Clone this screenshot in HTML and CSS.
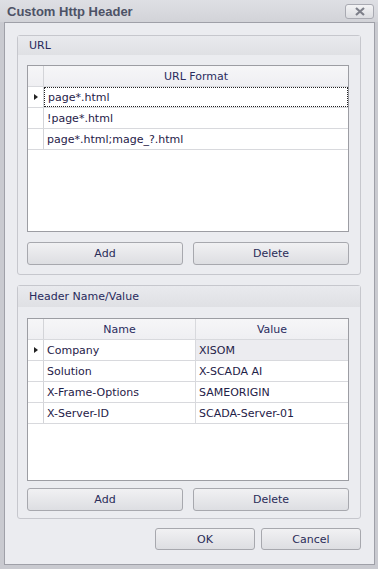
FILE: index.html
```html
<!DOCTYPE html>
<html>
<head>
<meta charset="utf-8">
<link rel="stylesheet" href="styles.css">
</head>
<body>
<div class="window">
  <div class="titlebar">
    <span class="title">Custom Http Header</span>
    <button class="close" type="button" aria-label="Close">
      <svg width="12" height="9" viewBox="0 0 12 9"><path d="M2 1 L10 8 M10 1 L2 8" stroke="#7d7f89" stroke-width="2.2" fill="none"/></svg>
    </button>
  </div>
  <div class="client">
    <section class="group">
      <div class="group-head">URL</div>
      <div class="group-body">
        <div class="grid grid-url">
          <div class="row head">
            <div class="ind"></div>
            <div class="cell hcell">URL Format</div>
          </div>
          <div class="row">
            <div class="ind"><span class="arrow"></span></div>
            <div class="cell"><span class="focus">page*.html</span></div>
          </div>
          <div class="row">
            <div class="ind"></div>
            <div class="cell">!page*.html</div>
          </div>
          <div class="row">
            <div class="ind"></div>
            <div class="cell">page*.html;mage_?.html</div>
          </div>
          <div class="filler"></div>
        </div>
        <div class="btn-row">
          <button class="btn" type="button">Add</button>
          <button class="btn" type="button">Delete</button>
        </div>
      </div>
    </section>

    <section class="group group-2">
      <div class="group-head">Header Name/Value</div>
      <div class="group-body">
        <div class="grid grid-hv">
          <div class="row head">
            <div class="ind"></div>
            <div class="cell hcell">Name</div>
            <div class="cell hcell">Value</div>
          </div>
          <div class="row">
            <div class="ind"><span class="arrow"></span></div>
            <div class="cell">Company</div>
            <div class="cell sel">XISOM</div>
          </div>
          <div class="row">
            <div class="ind"></div>
            <div class="cell">Solution</div>
            <div class="cell">X-SCADA AI</div>
          </div>
          <div class="row">
            <div class="ind"></div>
            <div class="cell">X-Frame-Options</div>
            <div class="cell">SAMEORIGIN</div>
          </div>
          <div class="row">
            <div class="ind"></div>
            <div class="cell">X-Server-ID</div>
            <div class="cell">SCADA-Server-01</div>
          </div>
          <div class="filler"></div>
        </div>
        <div class="btn-row">
          <button class="btn" type="button">Add</button>
          <button class="btn" type="button">Delete</button>
        </div>
      </div>
    </section>

    <div class="dialog-buttons">
      <button class="btn btn-dlg" type="button">OK</button>
      <button class="btn btn-dlg" type="button">Cancel</button>
    </div>
  </div>
</div>
</body>
</html>
```
FILE: styles.css
```css
* { box-sizing: border-box; }
html, body {
  margin: 0;
  padding: 0;
}
body {
  background: #c8c9cf;
  font-family: "DejaVu Sans", Verdana, sans-serif;
  font-size: 11px;
  color: #1f2148;
}
.window {
  width: 378px;
  height: 569px;
  display: flex;
  flex-direction: column;
  background: #c9cad0;
  padding: 0 3px 4px 4px;
}
.titlebar {
  height: 22px;
  margin: 0 -3px 0 -4px;
  padding: 0 4px 0 7px;
  display: flex;
  align-items: center;
  justify-content: space-between;
  background: linear-gradient(#dedfe4, #d2d3d8);
}
.title {
  font-family: "Liberation Sans", Arial, sans-serif;
  font-weight: bold;
  font-size: 13px;
  color: #4d5266;
  padding-top: 1px;
}
.close {
  width: 29px;
  height: 15px;
  margin-top: 1px;
  padding: 0;
  border: 1px solid #a9aab2;
  border-radius: 3px;
  background: linear-gradient(#f3f3f5, #dcdde1);
  display: flex;
  align-items: center;
  justify-content: center;
}
.client {
  flex: 1;
  border: 1px solid #9fa0a8;
  background: #ebecf0;
  padding: 12px 13px 0 12px;
  display: flex;
  flex-direction: column;
}
.group {
  border: 1px solid #c6c7cd;
  border-radius: 3px;
  height: 240px;
  display: flex;
  flex-direction: column;
}
.group-2 {
  margin-top: 10px;
  height: 234px;
}
.group-head {
  height: 19px;
  padding: 3px 0 0 11px;
  background: linear-gradient(#e9eaee, #dfe0e4);
  color: #282a5c;
}
.group-2 .group-head {
  height: 21px;
  padding-top: 4px;
}
.group-body {
  flex: 1;
  display: flex;
  flex-direction: column;
  padding: 10px 11px 9px 9px;
}
.group-2 .group-body {
  padding: 11px 11px 7px 9px;
}
.grid {
  background: #fff;
  border: 1px solid #9c9da3;
  display: flex;
  flex-direction: column;
}
.grid-url { height: 167px; }
.grid-hv { height: 163px; }
.row {
  display: flex;
  height: 21px;
  border-bottom: 1px solid #d8d9dd;
}
.row.head {
  background: linear-gradient(#f6f6f8, #efeff2);
}
.ind {
  width: 16px;
  flex: none;
  border-right: 1px solid #d3d4d8;
  display: flex;
  align-items: center;
  justify-content: center;
}
.arrow {
  width: 0;
  height: 0;
  border-top: 3.5px solid transparent;
  border-bottom: 3.5px solid transparent;
  border-left: 4px solid #222;
  margin-left: 1px;
}
.cell {
  flex: 1;
  display: flex;
  align-items: center;
  padding: 0 3px;
  white-space: nowrap;
}
.grid-hv .cell:nth-child(2) {
  flex: none;
  width: 152px;
  border-right: 1px solid #d8d9dd;
}
.hcell {
  justify-content: center;
  color: #2a2c5e;
}
.cell.sel {
  background: #ececf0;
}
.grid-url .row:nth-child(2) .cell {
  padding: 0;
}
.focus {
  display: flex;
  align-items: center;
  width: 100%;
  height: 100%;
  padding: 0 3px;
  border: 1px dotted #222;
}
.filler { flex: 1; }
.btn-row {
  display: flex;
  gap: 10px;
  margin-top: 10px;
}
.group-2 .btn-row { margin-top: 7px; }
.btn {
  flex: 1;
  height: 23px;
  padding: 0;
  border: 1px solid #a7a8ae;
  border-radius: 3px;
  background: linear-gradient(#f1f1f3, #dddee2);
  font-family: "DejaVu Sans", Verdana, sans-serif;
  font-size: 11px;
  color: #2a2c58;
}
.dialog-buttons {
  display: flex;
  justify-content: flex-end;
  gap: 6px;
  margin-top: 9px;
}
.btn-dlg {
  flex: none;
  width: 100px;
  height: 22px;
}
```
